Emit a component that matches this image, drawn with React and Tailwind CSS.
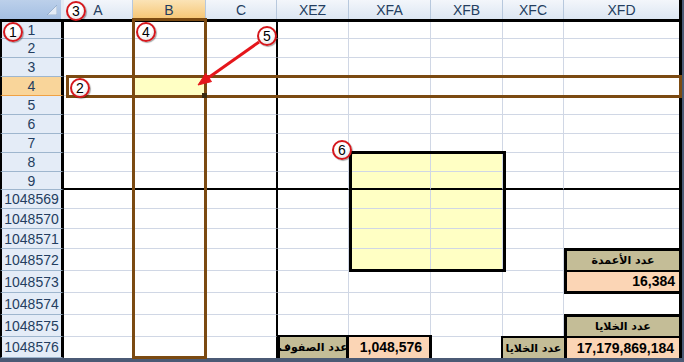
import React from 'react';

const cols = [
  { name: 'A', w: 'w-[69px]' },
  { name: 'B', w: 'w-[73px]', sel: true },
  { name: 'C', w: 'w-[71px]' },
  { name: 'XEZ', w: 'w-[72px]' },
  { name: 'XFA', w: 'w-[82px]' },
  { name: 'XFB', w: 'w-[72px]' },
  { name: 'XFC', w: 'w-[61px]' },
  { name: 'XFD', w: 'w-[115px]' },
];

const rows = [
  { n: '1', h: 'h-[17px]' },
  { n: '2', h: 'h-[19px]' },
  { n: '3', h: 'h-[19px]' },
  { n: '4', h: 'h-[19px]', sel: true },
  { n: '5', h: 'h-[19px]' },
  { n: '6', h: 'h-[19px]' },
  { n: '7', h: 'h-[19px]' },
  { n: '8', h: 'h-[19px]' },
  { n: '9', h: 'h-[18px]', split: true },
  { n: '1048569', h: 'h-[19px]' },
  { n: '1048570', h: 'h-[20px]' },
  { n: '1048571', h: 'h-[20px]' },
  { n: '1048572', h: 'h-[22px]' },
  { n: '1048573', h: 'h-[22px]' },
  { n: '1048574', h: 'h-[22px]' },
  { n: '1048575', h: 'h-[22px]' },
  { n: '1048576', h: 'h-[21px]', last: true },
];

const ar = "font-['DejaVu_Sans',sans-serif] font-bold text-[11px] whitespace-nowrap leading-none text-black";
const num = "font-['Liberation_Sans',Arial,sans-serif] font-bold text-[14px] whitespace-nowrap text-black";

function Special({ r, c }) {
  const key = r.n + '|' + c.name;
  switch (key) {
    case '1048572|XFD':
      return (
        <div className="relative -mt-px h-[22px] flex-1 border-l-[3px] border-t-[3px] border-black bg-[#c4bd97] flex items-center justify-center">
          <span dir="rtl" className={ar}>عدد الأعمدة</span>
        </div>
      );
    case '1048573|XFD':
      return (
        <div className="relative -mt-px h-[24px] flex-1 border-l-[3px] border-t-2 border-b-[3px] border-black bg-[#fbd5b5] flex items-center justify-end pr-[4px]">
          <span className={num}>16,384</span>
        </div>
      );
    case '1048575|XFD':
      return (
        <div className="relative -mt-px h-[22px] flex-1 border-l-[3px] border-t-[3px] border-black bg-[#c4bd97] flex items-center justify-center">
          <span dir="rtl" className={ar}>عدد الخلايا</span>
        </div>
      );
    case '1048576|XFD':
      return (
        <div className="relative -mt-px h-[22px] flex-1 border-l-[3px] border-t-2 border-black bg-[#fbd5b5] flex items-center justify-end pr-[5px]">
          <span className={num}>17,179,869,184</span>
        </div>
      );
    case '1048576|XFC':
      return (
        <div className="relative -mt-px -ml-[2px] -mr-px h-[22px] flex-1 border-l-2 border-t-2 border-black bg-[#c4bd97] flex items-center justify-center">
          <span dir="rtl" className={ar}>عدد الخلايا</span>
        </div>
      );
    case '1048576|XEZ':
      return (
        <div className="relative -mt-[2px] -ml-px -mr-px h-[23px] flex-1 border-l-[3px] border-t-2 border-r-[3px] border-black bg-[#c4bd97] flex items-center justify-center overflow-hidden">
          <span dir="rtl" className={ar}>عدد الصفوف</span>
        </div>
      );
    case '1048576|XFA':
      return (
        <div className="relative -mt-[2px] -mr-[2px] h-[23px] flex-1 border-t-2 border-r-[3px] border-black bg-[#fbd5b5] flex items-center justify-end pr-[7px]">
          <span className={num}>1,048,576</span>
        </div>
      );
    default:
      return null;
  }
}

function Circle({ pos, n }) {
  return (
    <div
      className={`absolute ${pos} w-[20px] h-[20px] rounded-full border-2 border-[#d5171c] bg-[radial-gradient(circle_at_45%_35%,#ffffff_45%,#dcdcdc_100%)] shadow-[1px_1px_1px_rgba(0,0,0,0.35)] flex items-center justify-center font-['Liberation_Sans',Arial,sans-serif] text-[14px] leading-none text-black`}
    >
      {n}
    </div>
  );
}

export default function App() {
  return (
    <div className="relative w-[684px] h-[362px] bg-[#4b5a75] overflow-hidden font-['Liberation_Sans',Arial,sans-serif]">
      <div className="w-[682px] h-[358px] border-r-[3px] border-black bg-white flex flex-col">
        {/* column headers */}
        <div className="flex h-[19px] shrink-0">
          <div className="w-[61px] shrink-0 bg-[linear-gradient(#bcd0ea,#a4bfe3)] flex items-end justify-end pr-[4px] pb-[4px]">
            <svg width="10" height="10" viewBox="0 0 10 10">
              <polygon points="0,10 10,10 10,0" fill="#e3ebf6" stroke="#8fa8c8" strokeWidth="0.8" />
            </svg>
          </div>
          <div className="w-[3px] shrink-0 bg-[#e3eaf4]" />
          {cols.map((c) => (
            <div
              key={c.name}
              className={`${c.w} shrink-0 flex items-center justify-center text-[14px] leading-none ${
                c.sel
                  ? 'bg-[linear-gradient(#fbe3b6,#f6c674)] text-[#1f3b5e]'
                  : 'bg-[linear-gradient(#f3f6fb,#dce6f2)] text-[#243e60]'
              } ${c.name === 'XFD' ? '' : 'border-r border-r-[#b7c8dd]'}`}
            >
              {c.name}
            </div>
          ))}
        </div>
        <div className="h-[3px] shrink-0 bg-black" />
        {/* body rows */}
        {rows.map((r, ri) => (
          <div key={r.n} className={`flex ${r.h} shrink-0`}>
            <div
              className={`w-[64px] shrink-0 border-l-2 border-l-black border-r-[3px] border-r-black border-b flex items-center justify-center text-[14px] leading-none text-[#243e60] ${
                r.sel ? 'bg-[#f9d59a] border-b-[#f0a244]' : 'bg-[#e4ecf7] border-b-[#9eb6ce]'
              }`}
            >
              {r.n}
            </div>
            {cols.map((c) => {
              const yellow =
                (c.name === 'B' && r.sel) ||
                ((c.name === 'XFA' || c.name === 'XFB') && ri >= 7 && ri <= 12);
              const br =
                c.name === 'XFD' ? '' : c.name === 'C' ? 'border-r border-r-black' : 'border-r border-r-[#d0d7e5]';
              const bl = c.name === 'XEZ' ? 'border-l border-l-black' : '';
              const bb = r.last ? '' : r.split ? 'border-b-2 border-b-black' : 'border-b border-b-[#d0d7e5]';
              return (
                <div
                  key={c.name}
                  className={`${c.w} shrink-0 flex ${br} ${bl} ${bb} ${yellow ? 'bg-[#ffffc4]' : 'bg-white'}`}
                >
                  <Special r={r} c={c} />
                </div>
              );
            })}
          </div>
        ))}
      </div>

      {/* overlays */}
      <div className="absolute left-[132px] top-[18px] w-[75px] h-[341px] border-[3px] border-[#7b4a12]" />
      <div className="absolute left-[66px] top-[75px] w-[616px] h-[23px] border-[3px] border-[#7b4a12]" />
      <div className="absolute left-[202px] top-[93px] w-[5px] h-[5px] bg-[#3a2a10]" />
      <div className="absolute left-[349px] top-[151px] w-[157px] h-[121px] border-[3px] border-black" />

      <svg className="absolute left-0 top-0 pointer-events-none" width="684" height="362" viewBox="0 0 684 362">
        <line x1="259" y1="42" x2="208" y2="78" stroke="#e5161b" strokeWidth="3" />
        <polygon points="198,85 211.5,81.6 205.7,73.4" fill="#e5161b" stroke="#e5161b" strokeWidth="1" strokeLinejoin="round" />
      </svg>

      <Circle pos="left-[3px] top-[22px]" n="1" />
      <Circle pos="left-[70px] top-[78px]" n="2" />
      <Circle pos="left-[66px] top-[1px]" n="3" />
      <Circle pos="left-[136px] top-[22px]" n="4" />
      <Circle pos="left-[257px] top-[26px]" n="5" />
      <Circle pos="left-[332px] top-[140px]" n="6" />
    </div>
  );
}
